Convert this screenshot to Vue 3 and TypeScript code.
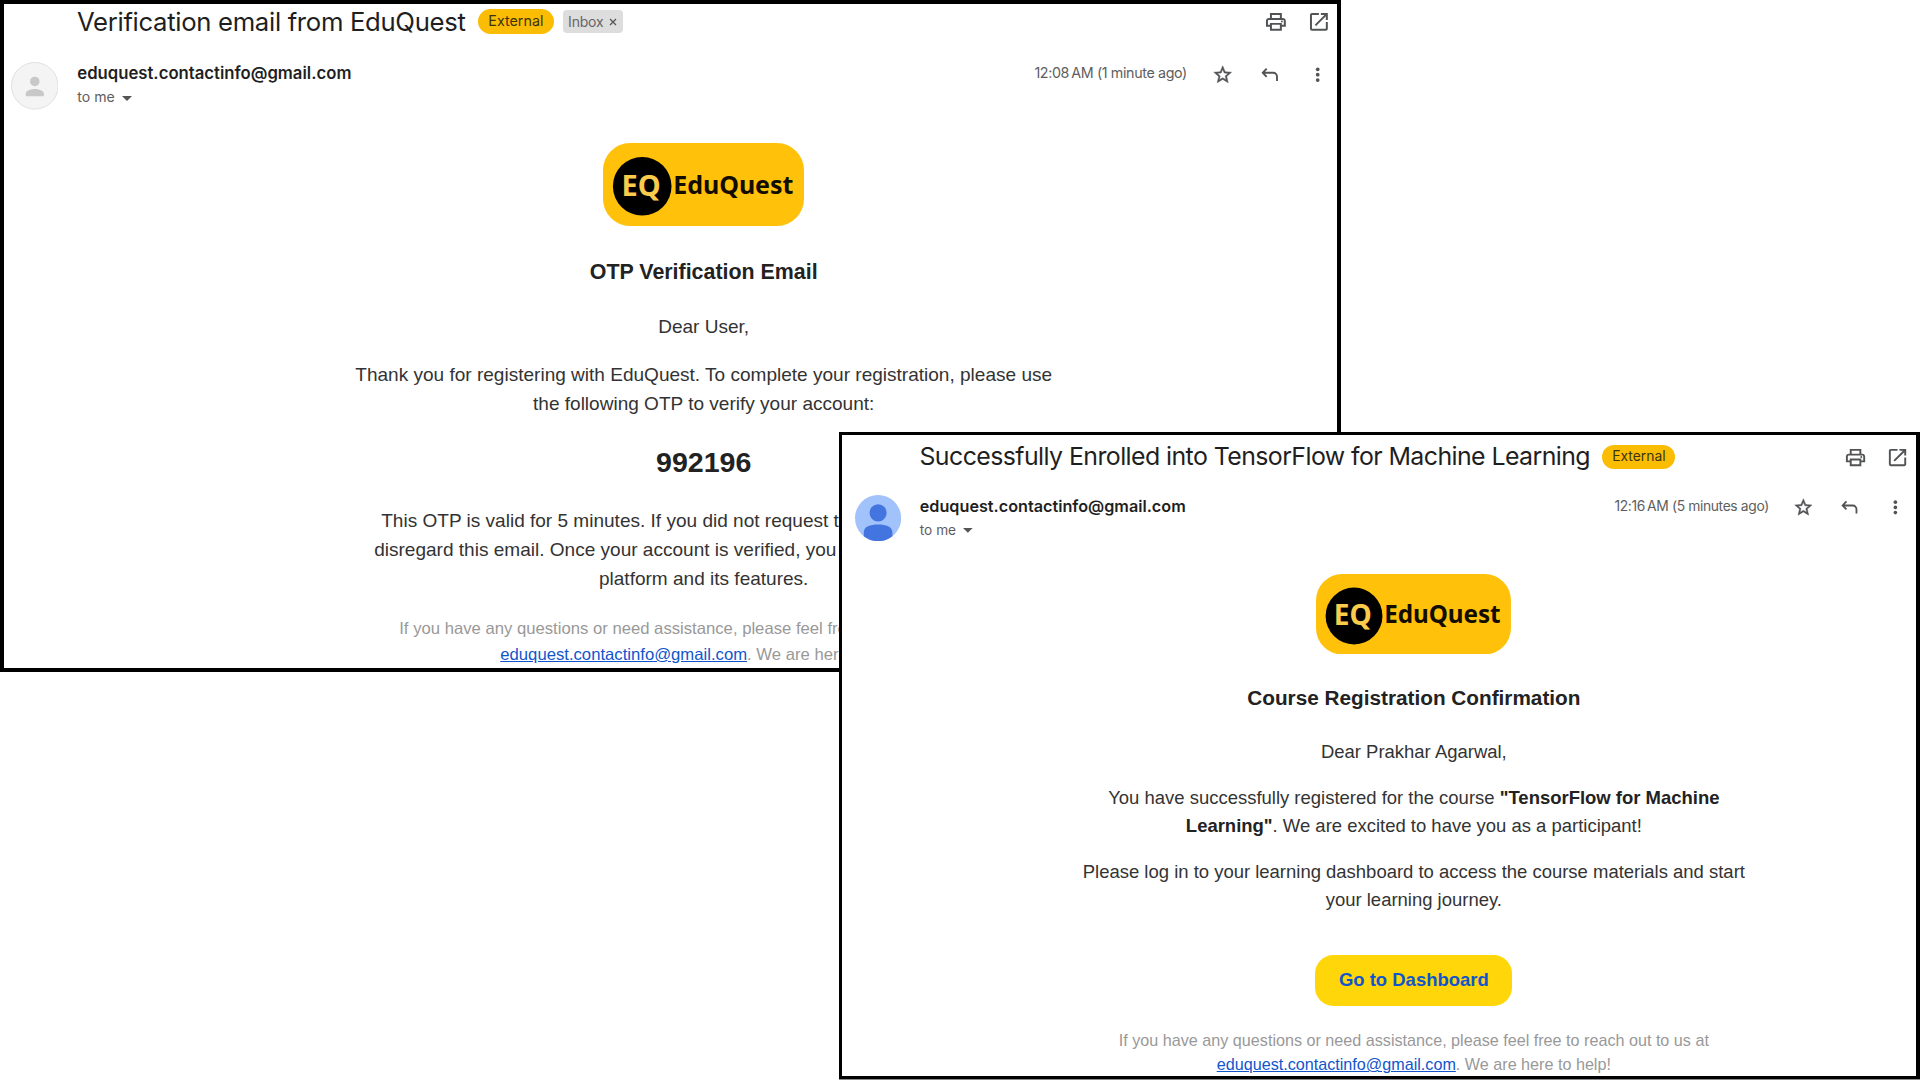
<script setup lang="ts">
interface Mail {
  id: string
  subject: string
  inbox: boolean
  time: string
  sender: string
}

const mails: Mail[] = [
  {
    id: 'otp',
    subject: 'Verification email from EduQuest',
    inbox: true,
    time: '12:08\u202fAM (1 minute ago)',
    sender: 'eduquest.contactinfo@gmail.com',
  },
  {
    id: 'course',
    subject: 'Successfully Enrolled into TensorFlow for Machine Learning',
    inbox: false,
    time: '12:16\u202fAM (5 minutes ago)',
    sender: 'eduquest.contactinfo@gmail.com',
  },
]
</script>

<template>
  <main class="desk">
    <section v-for="mail in mails" :key="mail.id" class="window" :class="mail.id">
      <header class="subject-row">
        <h1 class="subject">{{ mail.subject }}</h1>
        <span class="external">External</span>
        <span v-if="mail.inbox" class="inbox">
          Inbox
          <svg class="close" viewBox="0 0 8 8"><path d="M1 1l6 6M7 1L1 7" /></svg>
        </span>
        <div class="tools top-tools">
          <svg class="icon" viewBox="0 0 24 24">
            <path d="M19 8h-1V3H6v5H5c-1.66 0-3 1.34-3 3v6h4v4h12v-4h4v-6c0-1.66-1.34-3-3-3zM8 5h8v3H8V5zm8 12v2H8v-4h8v2zm2-2v-2H6v2H4v-4c0-.55.45-1 1-1h14c.55 0 1 .45 1 1v4h-2z" />
            <circle cx="18" cy="11.5" r="1" />
          </svg>
          <svg class="icon" viewBox="0 0 24 24">
            <path d="M19 19H5V5h7V3H5c-1.11 0-2 .9-2 2v14c0 1.1.89 2 2 2h14c1.1 0 2-.9 2-2v-7h-2v7zM14 3v2h3.59l-9.83 9.83 1.41 1.41L19 6.41V10h2V3h-7z" />
          </svg>
        </div>
      </header>

      <div class="sender-row">
        <svg v-if="mail.id === 'otp'" class="avatar" viewBox="0 0 40 40">
          <circle cx="20" cy="20" r="19.6" fill="#f4f4f4" stroke="#dedede" stroke-width=".8" />
          <circle cx="20" cy="16.3" r="4" fill="#c8c8c8" />
          <path d="M12.4 28.8v-2.2c0-2.8 4.4-4 7.6-4s7.6 1.2 7.6 4v2.2z" fill="#c8c8c8" />
        </svg>
        <svg v-else class="avatar" viewBox="0 0 40 40">
          <circle cx="20" cy="20" r="20" fill="#a1c2fa" />
          <circle cx="20" cy="15.5" r="7.4" fill="#4374e0" />
          <path d="M7.6 35.7v-3.2c0-5.4 5.6-7 12.4-7s12.4 1.6 12.4 7v3.2A20 20 0 0 1 20 40a20 20 0 0 1-12.4-4.3z" fill="#4374e0" />
        </svg>
        <div class="sender">
          <strong class="address">{{ mail.sender }}</strong>
          <span class="to">to me <svg class="caret" viewBox="0 0 10 5"><path d="M0 0h10L5 5z" /></svg></span>
        </div>
        <span class="time">{{ mail.time }}</span>
        <div class="tools">
          <svg class="icon small star" viewBox="0 0 24 24">
            <path d="M22 9.24l-7.19-.62L12 2 9.19 8.63 2 9.24l5.46 4.73L5.82 21 12 17.27 18.18 21l-1.63-7.03L22 9.24zM12 15.4l-3.76 2.27 1-4.28-3.32-2.88 4.38-.38L12 6.1l1.71 4.04 4.38.38-3.32 2.88 1 4.28L12 15.4z" />
          </svg>
          <svg class="icon small line" viewBox="0 0 24 24">
            <path d="M8.6 5.2L4.2 9.8l4.4 4.6M4.4 9.8H16a4.2 4.2 0 0 1 4.2 4.2v5" />
          </svg>
          <svg class="icon small" viewBox="0 0 24 24">
            <circle cx="12" cy="6" r="2.1" /><circle cx="12" cy="12" r="2.1" /><circle cx="12" cy="18" r="2.1" />
          </svg>
        </div>
      </div>

      <article class="body">
        <svg class="logo" viewBox="0 0 201 83">
          <rect width="201" height="83" rx="27" fill="#ffc10a" />
          <circle cx="39.2" cy="43.3" r="29.3" fill="#000" />
          <text class="monogram" x="18.4" y="52.8">EQ</text>
          <text class="wordmark" x="70.3" y="50.8" textLength="120">EduQuest</text>
        </svg>

        <template v-if="mail.id === 'otp'">
          <h2>OTP Verification Email</h2>
          <p class="greeting">Dear User,</p>
          <p>Thank you for registering with EduQuest. To complete your registration, please use<br />the following OTP to verify your account:</p>
          <p class="code">992196</p>
          <p class="note">This OTP is valid for 5 minutes. If you did not request this verification, please<br />disregard this email. Once your account is verified, you will have access to our<br />platform and its features.</p>
        </template>
        <template v-else>
          <h2>Course Registration Confirmation</h2>
          <p class="greeting">Dear Prakhar Agarwal,</p>
          <p>You have successfully registered for the course <b>"TensorFlow for Machine<br />Learning"</b>. We are excited to have you as a participant!</p>
          <p>Please log in to your learning dashboard to access the course materials and start<br />your learning journey.</p>
          <a class="button">Go to Dashboard</a>
        </template>

        <p class="help">If you have any questions or need assistance, please feel free to reach out to us at<br /><a>eduquest.contactinfo@gmail.com</a>. We are here to help!</p>
      </article>
    </section>
  </main>
</template>

<style>
body {
  margin: 0;
  background: #fff;
}
</style>

<style scoped>
.desk {
  position: relative;
  width: 1920px;
  height: 1080px;
  overflow: hidden;
  background: #fff;
}
.window {
  position: absolute;
  box-sizing: border-box;
  overflow: hidden;
  background: #fff;
  border: 0 solid #000;
  font-family: Inter, "Open Sans", sans-serif;
  color: #222;
  white-space: nowrap;
}
/* --k scales every measure of a mail view */
.otp {
  --k: 1px;
  --track: -0.32px;
  --shift: 66.4px;
  --help-line: 25.6px;
  left: 0;
  top: 0;
  width: 1341px;
  height: 672px;
  border-width: 4px;
}
.course {
  --k: 0.97px;
  --track: -0.59px;
  --shift: 64px;
  --help-line: 24.2px;
  left: 839px;
  top: 432px;
  width: 1081px;
  height: 647px;
  border-width: 3px 4px 3px 3px;
  padding: 5px 1px 0 6.7px;
  box-shadow: 0 1px 0 #8a8a8a;
}
.subject-row {
  display: flex;
  align-items: center;
  height: calc(35 * var(--k));
  padding-left: calc(73 * var(--k));
}
.subject {
  margin: 0;
  font-size: calc(25.7 * var(--k));
  font-weight: 400;
  line-height: calc(35 * var(--k));
  letter-spacing: var(--track);
  color: #1f1f1f;
}
.external {
  margin-left: calc(12.6 * var(--k));
  height: calc(24.4 * var(--k));
  padding: 0 calc(10.2 * var(--k));
  border-radius: calc(13 * var(--k));
  background: #fbbc04;
  font-size: calc(14.3 * var(--k));
  line-height: calc(24.4 * var(--k));
  color: #3c3411;
}
.inbox {
  display: flex;
  align-items: center;
  gap: 6px;
  margin-left: 9.5px;
  height: 22.5px;
  padding: 0 6px 0 5px;
  border-radius: 4px;
  background: #ddd;
  font-size: 14px;
  letter-spacing: -0.2px;
  color: #666;
}
.close {
  width: 8px;
  height: 8px;
  margin-top: 1px;
  stroke: #555;
  stroke-width: 1.3;
}
.tools {
  display: flex;
  align-items: center;
  gap: calc(26.1 * var(--k));
  margin-right: calc(8.7 * var(--k));
}
.top-tools {
  gap: calc(19.3 * var(--k));
  margin-left: auto;
  margin-right: calc(6.6 * var(--k));
  margin-top: calc(1.6 * var(--k));
}
.icon {
  display: block;
  width: calc(23.8 * var(--k));
  height: calc(23.8 * var(--k));
  fill: #515355;
}
.small {
  width: calc(21.4 * var(--k));
  height: calc(21.4 * var(--k));
}
.star {
  stroke: #515355;
  stroke-width: 0.5;
}
.line {
  fill: none;
  stroke: #515355;
  stroke-width: 2.1;
}
.sender-row {
  display: flex;
  align-items: flex-start;
  height: calc(48 * var(--k));
  margin-top: calc(22 * var(--k));
  padding-left: calc(6.8 * var(--k));
}
.avatar {
  width: calc(47.6 * var(--k));
  height: calc(47.6 * var(--k));
  margin-top: calc(1 * var(--k));
}
.course .avatar {
  margin-top: 0;
}
.sender {
  display: flex;
  flex-direction: column;
  margin-left: calc(18.9 * var(--k));
}
.address {
  font-size: calc(16.7 * var(--k));
  font-weight: 600;
  line-height: calc(24 * var(--k));
  color: #1f1f1f;
}
.to {
  display: flex;
  align-items: center;
  gap: calc(7.2 * var(--k));
  font-size: calc(14.1 * var(--k));
  line-height: calc(24 * var(--k));
  color: #5e5e5e;
}
.course .to {
  line-height: 22px;
}
.caret {
  width: calc(10 * var(--k));
  height: calc(5 * var(--k));
  margin-top: calc(2 * var(--k));
  fill: #555;
}
.time {
  margin-left: auto;
  margin-right: calc(25 * var(--k));
  font-size: calc(14.28 * var(--k));
  line-height: calc(24 * var(--k));
  letter-spacing: -0.36px;
  color: #5e5e5e;
}
.sender-row .tools {
  margin-top: calc(3 * var(--k));
}
.course .sender-row .tools {
  margin-top: 2px;
  margin-right: 9px;
}
.body {
  display: flex;
  flex-direction: column;
  align-items: center;
  margin-top: calc(34 * var(--k));
  padding-left: var(--shift);
  font-family: "Liberation Sans", Arial, sans-serif;
  font-size: calc(19.05 * var(--k));
  line-height: calc(28.7 * var(--k));
  text-align: center;
  color: #333;
}
.course .body {
  margin-top: 32px;
}
.logo {
  display: block;
  width: calc(201 * var(--k));
  height: calc(83 * var(--k));
}
.monogram,
.wordmark {
  font-family: "Noto Sans", "Open Sans", sans-serif;
}
.monogram {
  font-size: 29px;
  font-weight: 700;
  fill: #fbcb4b;
}
.wordmark {
  font-size: 25px;
  font-weight: 700;
  fill: #120d00;
}
h2 {
  margin: calc(30.1 * var(--k)) 0 0;
  font-size: calc(21.4 * var(--k));
  line-height: calc(32 * var(--k));
  color: #222;
}
.course h2 {
  margin-top: 28px;
}
p {
  margin: calc(19.1 * var(--k)) 0 0;
}
b {
  color: #222;
}
.greeting {
  margin-top: calc(25 * var(--k));
}
.code {
  margin-top: calc(23.2 * var(--k));
  font-size: calc(28.56 * var(--k));
  font-weight: 700;
  line-height: calc(42.8 * var(--k));
  color: #222;
}
.note {
  margin-top: calc(23.2 * var(--k));
}
.button {
  margin-top: calc(42.6 * var(--k));
  padding: 0 calc(24.2 * var(--k));
  border-radius: calc(19 * var(--k));
  background: #ffd60a;
  font-weight: 700;
  line-height: calc(52.3 * var(--k));
  color: #1155cc;
}
.help {
  margin-top: calc(22.8 * var(--k));
  font-size: calc(16.68 * var(--k));
  line-height: var(--help-line);
  color: #999;
}
.help a {
  color: #1155cc;
  text-decoration: underline;
}
</style>
